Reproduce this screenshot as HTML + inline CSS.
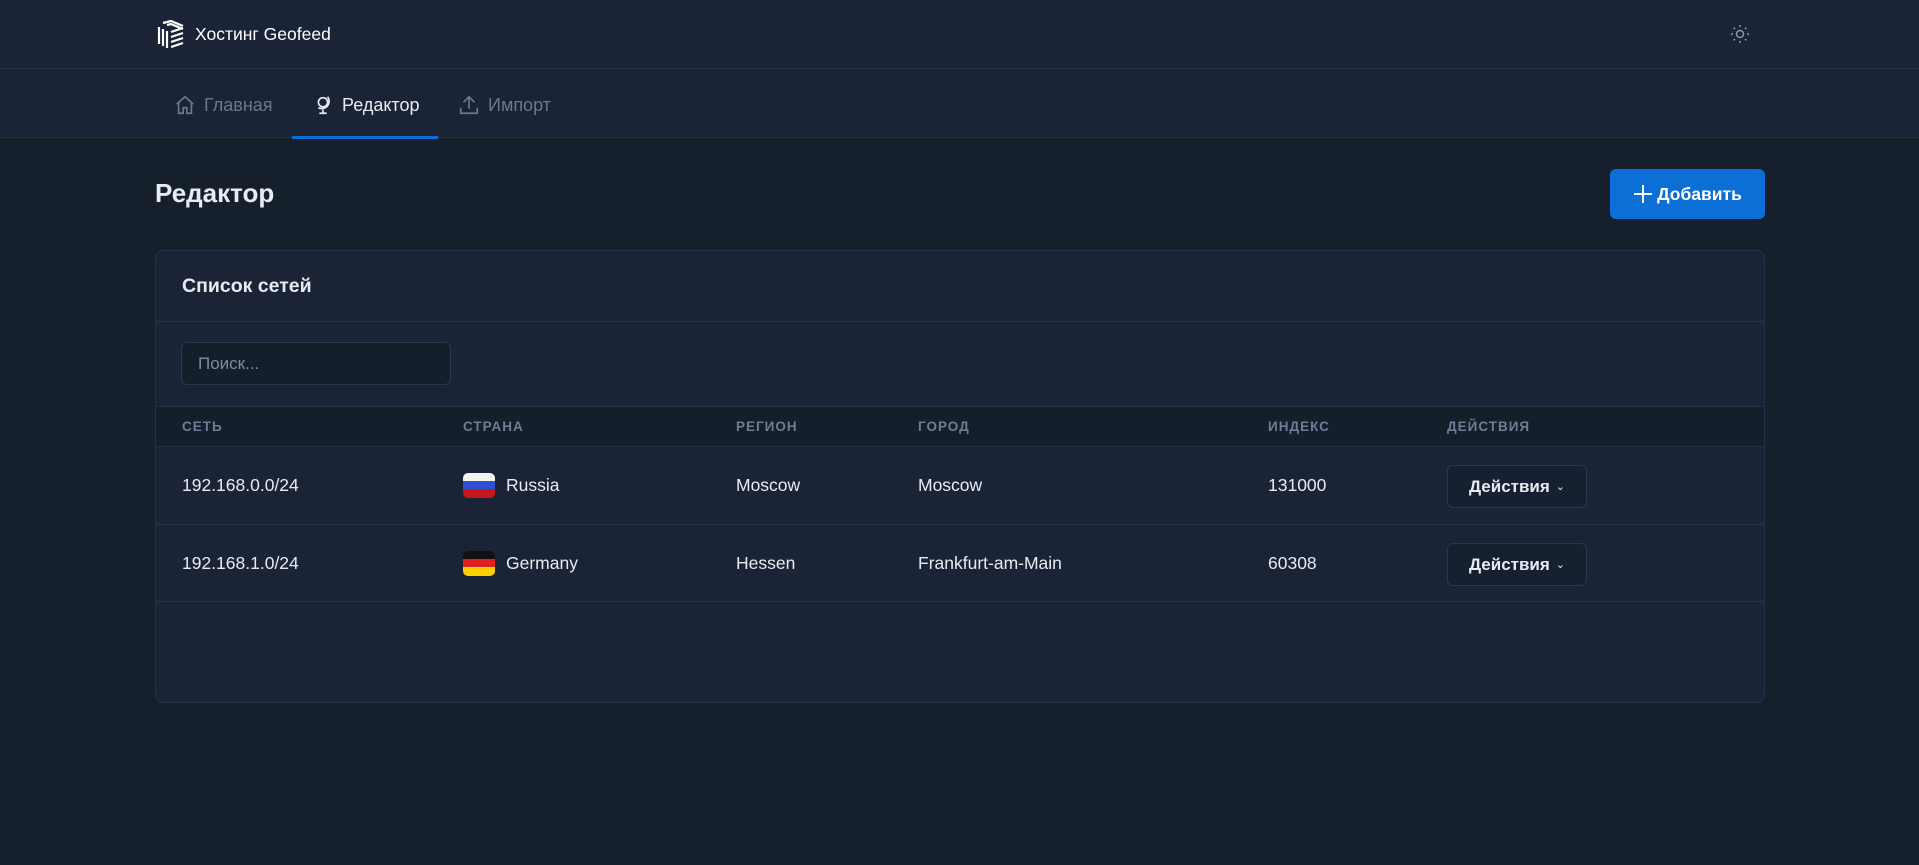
<!DOCTYPE html>
<html><head><meta charset="utf-8"><style>
*{box-sizing:border-box;margin:0;padding:0}
body{width:1919px;height:865px;background:#161f2c;font-family:"Liberation Sans",sans-serif;color:#e5e9f0;position:relative;overflow:hidden}
.top{position:absolute;left:0;top:0;width:1919px;height:138px;background:#1a2436;border-bottom:1px solid #28344b}
.hdr{position:absolute;left:0;top:0;width:1919px;height:69px;border-bottom:1px solid #28344b}
.abs{position:absolute}
.nav{font-size:18px;color:#6b7890;display:flex;align-items:center;gap:8px}
.card{left:155px;top:250px;width:1610px;height:453px;background:#1a2436;border:1px solid #26324a;border-radius:8px;overflow:hidden}
.th{font-size:13.5px;font-weight:bold;color:#6f7d96;letter-spacing:1px}
.td{font-size:17.5px;color:#e8ecf2}
.btn{border:1px solid #2b3750;border-radius:6px;background:#172030;font-size:17px;font-weight:bold;color:#e8ecf2;display:flex;align-items:center;justify-content:center;gap:6px}
</style></head><body>
<div class="top"></div>
<div class="hdr"></div>
<svg class="abs" style="left:157px;top:20px" width="27" height="28" viewBox="0 0 27 28" fill="none" stroke="#fff" stroke-width="2.2"><path d="M2 7v17M6 9v17M10 11v17"/><path d="M6 3l8-2 12 5M10 5l4-1 12 5M14 12l12-4M14 17l12-4M14 22l12-4M14 27l12-4"/></svg>
<div class="abs" style="left:195px;top:24px;font-size:17.5px;color:#fff">Хостинг Geofeed</div>
<svg class="abs" style="left:1730px;top:24px" width="20" height="20" viewBox="0 0 20 20" fill="none" stroke="#8a96aa" stroke-width="1.5"><circle cx="10" cy="10" r="3.5"/><path d="M10 1v2M10 17v2M1 10h2M17 10h2M3.6 3.6l1.4 1.4M15 15l1.4 1.4M3.6 16.4L5 15M15 5l1.4-1.4"/></svg>
<div class="abs nav" style="left:174px;top:94px"><svg width="22" height="22" viewBox="0 0 24 24" fill="none" stroke="#6b7890" stroke-width="1.8"><path d="M3 11l9-8 9 8M5 9v12h5v-6h4v6h5V9"/></svg>Главная</div>
<div class="abs nav" style="left:312px;top:94px;color:#e8ecf2"><svg width="22" height="22" viewBox="0 0 24 24" fill="none" stroke="#e8ecf2" stroke-width="1.8"><circle cx="12" cy="9" r="5"/><path d="M17 3a8 8 0 0 1-10 12M12 17v4M8 21h8"/></svg>Редактор</div>
<div class="abs" style="left:292px;top:136px;width:146px;height:3px;background:#0b6fd6"></div>
<div class="abs nav" style="left:458px;top:94px"><svg width="22" height="22" viewBox="0 0 24 24" fill="none" stroke="#6b7890" stroke-width="1.8"><path d="M12 16V3M6 9l6-6 6 6M3 15v6h18v-6"/></svg>Импорт</div>
<div class="abs" style="left:155px;top:178px;font-size:26px;font-weight:bold;color:#e8ecf2">Редактор</div>
<div class="abs" style="left:1610px;top:169px;width:155px;height:50px;background:#0b6fd6;border-radius:6px;color:#fff;font-size:17.5px;font-weight:bold;display:flex;align-items:center;justify-content:center;gap:4px"><svg width="20" height="20" viewBox="0 0 20 20" stroke="#fff" stroke-width="2"><path d="M10 1v18M1 10h18"/></svg>Добавить</div>
<div class="abs card">
 <div class="abs" style="left:26px;top:24px;font-size:19.5px;font-weight:bold;color:#e8ecf2">Список сетей</div>
 <div class="abs" style="left:0;top:70px;width:100%;border-top:1px solid #26324a"></div>
 <div class="abs" style="left:25px;top:91px;width:270px;height:43px;background:#151e2b;border:1px solid #2b3750;border-radius:6px;font-size:17px;color:#7f8ba0;padding:11px 16px">Поиск...</div>
 <div class="abs" style="left:0;top:155px;width:100%;height:41px;background:#151e2b;border-top:1px solid #26324a;border-bottom:1px solid #26324a"></div>
 <div class="abs th" style="left:26px;top:168px">СЕТЬ</div>
 <div class="abs th" style="left:307px;top:168px">СТРАНА</div>
 <div class="abs th" style="left:580px;top:168px">РЕГИОН</div>
 <div class="abs th" style="left:762px;top:168px">ГОРОД</div>
 <div class="abs th" style="left:1112px;top:168px">ИНДЕКС</div>
 <div class="abs th" style="left:1291px;top:168px">ДЕЙСТВИЯ</div>
 <div class="abs" style="left:0;top:273px;width:100%;border-top:1px solid #26324a"></div>
 <div class="abs" style="left:0;top:350px;width:100%;border-top:1px solid #26324a"></div>
 <div class="abs td" style="left:26px;top:224px">192.168.0.0/24</div>
 <div class="abs" style="left:307px;top:222px;width:32px;height:25px;border-radius:5px;overflow:hidden"><div style="height:8px;background:#f4f4f4"></div><div style="height:8px;background:#2d4fd0"></div><div style="height:9px;background:#c4161c"></div></div>
 <div class="abs td" style="left:350px;top:224px">Russia</div>
 <div class="abs td" style="left:580px;top:224px">Moscow</div>
 <div class="abs td" style="left:762px;top:224px">Moscow</div>
 <div class="abs td" style="left:1112px;top:224px">131000</div>
 <div class="abs btn" style="left:1291px;top:214px;width:140px;height:43px">Действия <span style="font-size:11px;font-weight:normal">⌄</span></div>
 <div class="abs td" style="left:26px;top:302px">192.168.1.0/24</div>
 <div class="abs" style="left:307px;top:300px;width:32px;height:25px;border-radius:5px;overflow:hidden"><div style="height:8px;background:#111"></div><div style="height:8px;background:#dd1f1f"></div><div style="height:9px;background:#ffcf00"></div></div>
 <div class="abs td" style="left:350px;top:302px">Germany</div>
 <div class="abs td" style="left:580px;top:302px">Hessen</div>
 <div class="abs td" style="left:762px;top:302px">Frankfurt-am-Main</div>
 <div class="abs td" style="left:1112px;top:302px">60308</div>
 <div class="abs btn" style="left:1291px;top:292px;width:140px;height:43px">Действия <span style="font-size:11px;font-weight:normal">⌄</span></div>
</div>
</body></html>
